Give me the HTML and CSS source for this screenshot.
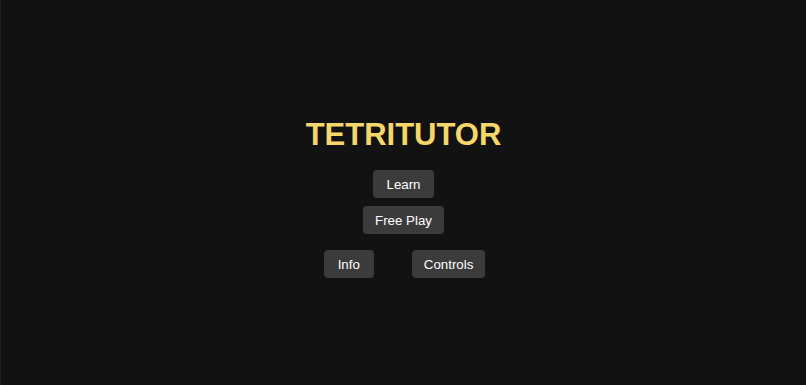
FILE: index.html
```html
<!DOCTYPE html>
<html>
<head>
<meta charset="utf-8">
<title>Tetritutor</title>
<link rel="stylesheet" href="styles.css">
</head>
<body>
<main class="menu">
  <h1 class="title">TETRITUTOR</h1>
  <button class="btn btn-learn">Learn</button>
  <button class="btn">Free Play</button>
  <div class="row">
    <button class="btn btn-info">Info</button>
    <button class="btn btn-controls">Controls</button>
  </div>
</main>
</body>
</html>
```
FILE: styles.css
```css
html, body {
  margin: 0;
  padding: 0;
  height: 100%;
  background: #121212;
}
body {
  border-left: 1px solid #1e1e1e;
  box-sizing: border-box;
  font-family: "Liberation Sans", Arial, sans-serif;
}
.menu {
  height: 100%;
  box-sizing: border-box;
  padding-top: 117px;
  display: flex;
  flex-direction: column;
  align-items: center;
}
.title {
  margin: 0 0 17px 0;
  font-size: 31px;
  font-weight: bold;
  color: #f5d76a;
  line-height: 36px;
}
.btn {
  height: 28px;
  padding: 0 12px;
  border: none;
  border-radius: 4px;
  background: #3b3b3b;
  color: #ffffff;
  font-family: "Liberation Sans", Arial, sans-serif;
  font-size: 13.3px;
  margin: 0 0 8px 0;
}
.btn-learn {
  padding: 0 13px;
}
.row {
  display: flex;
  gap: 38px;
  margin-top: 8px;
  margin-left: 2px;
}
.row .btn {
  margin: 0;
}
.btn-info {
  padding: 0 14px;
}
.btn-controls {
  padding: 0 12px;
}
```
